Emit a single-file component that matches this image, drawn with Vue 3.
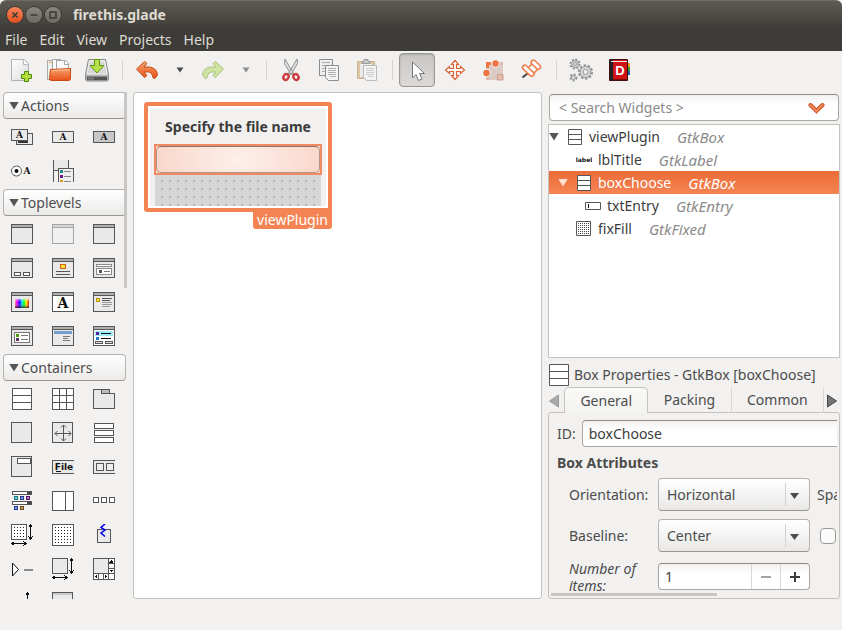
<script setup>
import { ref } from 'vue'

const D = '#565656'
const L = '#e9e9e9'
const box = (x, y, w, h, fill = L, stroke = D) => ({
  d: `M${x + 0.5} ${y + 0.5}h${w - 1}v${h - 1}h${1 - w}z`, fill, stroke
})
const solid = (x, y, w, h, fill) => ({ d: `M${x} ${y}h${w}v${h}h${-w}z`, fill, stroke: 'none' })
const line = (d, stroke = D) => ({ d, fill: 'none', stroke })
const glyph = (text, x, y, size) => ({ text, x, y, size })
const win = (fill = L, stroke = D, bar = '#b0b0b0') => [
  box(0, 1, 22, 20, fill, stroke), solid(1, 2, 20, 2, bar), line('M1 4.5h20', stroke)
]
const hArrow = line('M1 19.5h14M3.500 17.5l-2.500 2 2.500 2M12.500 17.5l2.500 2-2.500 2', '#111')
const vArrow = line('M19.5 1v14M17.500 3.5l2-2.500 2 2.500M17.500 12.5l2 2.500 2-2.500', '#111')
const dots = (x0, y0, nx, ny, step) => {
  const out = []
  for (let i = 0; i < nx; i++) for (let j = 0; j < ny; j++) out.push(solid(x0 + i * step, y0 + j * step, 1, 1, '#222'))
  return out
}

const groups = [
  {
    name: 'Actions',
    icons: [
      { id: 'Action Group', shapes: [box(5, 7, 17, 12), solid(7, 15, 10, 2, '#333'), box(0, 3, 17, 12), glyph('A', 8.5, 12, 9)] },
      { id: 'Action', shapes: [box(0, 5, 22, 12), glyph('A', 11, 14, 9)] },
      { id: 'Toggle Action', shapes: [box(0, 5, 22, 12, '#c8c8c8'), glyph('A', 11, 14, 9)] },
      { id: 'Radio Action', shapes: [{ d: 'M5.500 6a5 5 0 1 0 .01 0z', fill: '#fff', stroke: D, smooth: true }, { d: 'M5.500 9a2 2 0 1 0 .01 0z', fill: '#111', stroke: 'none', smooth: true }, glyph('A', 16, 14, 9)] },
      { id: 'Recent Action', shapes: [solid(2, 0, 15, 10, '#e9e9e9'), line('M1.500 0v22M16.500 0v8M2 10.500h4'), { d: 'M6.500 22v-13.500h15v13.500', fill: '#eee', stroke: D }, solid(8, 10, 3, 3, '#1f8a8a'), solid(8, 15, 3, 3, '#6a1f8a'), solid(8, 20, 3, 2, '#d59a1a'), line('M12 11.500h7M12 16.500h7M12 21.500h7', '#888')] }
    ]
  },
  {
    name: 'Toplevels',
    icons: [
      { id: 'Window', shapes: win() },
      { id: 'Offscreen Window', shapes: win('#f0f0f0', '#a5a5a5', '#d5d5d5') },
      { id: 'Application Window', shapes: win() },
      { id: 'Dialog Box', shapes: [...win(), box(3, 15, 7, 4, '#fff'), box(12, 15, 7, 4, '#fff')] },
      { id: 'About Dialog', shapes: [...win(), box(8, 7, 6, 5, '#ffe13a', '#d5620a'), line('M4 14.500h14M4 17.500h14')] },
      { id: 'Assistant', shapes: [...win(), box(3, 7, 16, 3, '#fff', '#8a8a8a'), box(3, 11, 16, 7, '#fff', '#8a8a8a'), solid(6, 13, 3, 3, '#555'), line('M11 14.500h6', '#777')] },
      { id: 'Color Chooser Dialog', shapes: [...win(), solid(4, 8, 14, 9, 'url(#hues)'), solid(4, 8, 14, 9, 'url(#shade)')] },
      { id: 'Font Chooser Dialog', shapes: [...win('#fff'), glyph('A', 11, 17, 14)] },
      { id: 'Message Dialog', shapes: [...win(), box(3, 7, 4, 4, '#ffe13a', '#b8920a'), line('M9 7.500h10M9 9.500h8'), line('M9 11.500h10M9 13.500h10M9 15.500h8', '#9a9a9a')] },
      { id: 'Recent Chooser Dialog', shapes: [...win(), box(3, 7, 16, 11, '#fff', '#777'), solid(5, 9, 3, 3, '#4a9a08'), solid(5, 13, 3, 3, '#5c3566'), line('M10 10.500h7M10 14.500h7', '#777')] },
      { id: 'App Chooser Dialog', shapes: [...win(), solid(2, 6, 18, 3, '#729fcf'), line('M11 11.500h7M11 13.500h5M11 15.500h7', '#777')] },
      { id: 'File Chooser Dialog', shapes: [...win('#fff'), solid(2, 6, 18, 5, '#9eecf5'), solid(3, 7, 3, 3, '#5b1fa0'), solid(3, 12, 3, 3, '#1f7ad5'), line('M8 8.500h10M8 13.500h10', '#111'), box(2, 16, 8, 3, '#ddd'), box(12, 16, 8, 3, '#ddd')] }
    ]
  },
  {
    name: 'Containers',
    icons: [
      { id: 'Box', shapes: [box(1, 0, 20, 22, '#fff'), line('M1 7.500h20M1 14.500h20')] },
      { id: 'Grid', shapes: [box(0, 0, 22, 22, '#fff'), line('M0 7.500h22M0 14.500h22M7.500 0v22M14.500 0v22')] },
      { id: 'Notebook', shapes: [{ d: 'M.5 20.500v-19h8v4h13v15z', fill: L, stroke: D }, box(8, 1, 9, 5, '#bbb')] },
      { id: 'Frame', shapes: [box(0, 0, 21, 21)] },
      { id: 'Aspect Frame', shapes: [box(0, 0, 21, 21), { ...line('M3 11.500h16M11.500 3v16M9 5.500l2.500-2.500 2.500 2.500M9 16.500l2.500 2.500 2.500-2.500M5.500 9l-2.500 2.500 2.500 2.500M16.500 9l2.500 2.500-2.500 2.500'), smooth: true }] },
      { id: 'List Box', shapes: [box(1, 1, 20, 6, '#fff'), box(1, 8, 20, 6, '#fff'), box(1, 15, 20, 6, '#fff')] },
      { id: 'Overlay', shapes: [box(0, 0, 21, 21), box(6, 2, 14, 6, '#fff')] },
      { id: 'Menu Bar', shapes: [{ d: 'M22 4.500h-21.500v13h21.500', fill: L, stroke: D }, { ...glyph('File', 12, 14, 9), mono: true }, line('M4 15.500h5', '#111')] },
      { id: 'Toolbar', shapes: [{ d: 'M22 4.500h-21.500v13h21.500', fill: L, stroke: D }, box(3, 7, 8, 8, '#eee'), box(13, 7, 8, 8, '#eee')] },
      { id: 'Tool Palette', shapes: [box(1, 1, 20, 4, '#fff'), solid(16, 2, 4, 2, '#444'), box(3, 6, 4, 4, '#7acccc', '#178080'), box(9, 6, 4, 4, '#8a9ae0', '#223a90'), box(15, 6, 4, 4, '#c07ac8', '#5a1a70'), box(1, 11, 20, 4, '#fff'), solid(16, 12, 4, 2, '#444'), box(3, 16, 4, 4, '#8a9ae0', '#223a90'), box(9, 16, 4, 4, '#c8a070', '#6a4a1a')] },
      { id: 'Paned', shapes: [box(0, 1, 22, 20, '#fff'), line('M13.500 1v20')] },
      { id: 'Button Box', shapes: [box(0, 7, 6, 6, '#fff'), box(8, 7, 6, 6, '#fff'), box(16, 7, 6, 6, '#fff')] },
      { id: 'Layout', shapes: [box(0, 0, 16, 16, '#fff'), ...dots(3, 3, 4, 4, 3), hArrow, vArrow] },
      { id: 'Fixed', shapes: [box(0, 0, 22, 22, '#fff'), ...dots(3, 3, 6, 6, 3)] },
      { id: 'Event Box', shapes: [box(4, 5, 14, 14), { ...line('M12 0l-4 3.500 4 2.500-4 3 4 3.500', '#0000f0'), width: 1.5, smooth: true }] },
      { id: 'Expander', shapes: [{ d: 'M1.500 5v13l6-6.500z', fill: '#fff', stroke: '#111', smooth: true }, solid(13, 11, 9, 2, '#8a8a8a')] },
      { id: 'Viewport', shapes: [box(0, 0, 16, 16), hArrow, vArrow] },
      { id: 'Scrolled Window', shapes: [box(0, 0, 22, 22, '#fff'), solid(1, 1, 14, 14, L), line('M15.500 0v22M0 15.500h22M5.500 15v7M10.500 15v7M15 5.500h7M15 10.500h7'), { d: 'M18.500 2l2 2.500h-4zM18.500 14l2-2.500h-4zM2 18.500l2-2v4zM14 18.500l-2-2v4z', fill: '#111', stroke: 'none' }] },
      { id: 'Size Group', shapes: [line('M16.500 1v14M14.500 3.500l2-2.500 2 2.500', '#111')] },
      { id: 'Revealer', shapes: [box(0, 0, 21, 21), solid(1, 1, 19, 2, '#ccc')] }
    ]
  }
]

const menus = ['File', 'Edit', 'View', 'Projects', 'Help']
const tree = [
  { name: 'viewPlugin', type: 'GtkBox', depth: 0, icon: 'box', open: true },
  { name: 'lblTitle', type: 'GtkLabel', depth: 1, icon: 'label' },
  { name: 'boxChoose', type: 'GtkBox', depth: 1, icon: 'box', open: true },
  { name: 'txtEntry', type: 'GtkEntry', depth: 2, icon: 'entry' },
  { name: 'fixFill', type: 'GtkFixed', depth: 1, icon: 'fixed' }
]
const selected = ref('boxChoose')
const tabs = ['General', 'Packing', 'Common']
const activeTab = ref('General')
const search = ref('')
const entryText = ref('')
const widgetId = ref('boxChoose')
const orientation = ref('Horizontal')
const baseline = ref('Center')
const items = ref(1)
</script>

<template>
  <div class="app">
    <svg class="defs" aria-hidden="true">
      <defs>
        <linearGradient id="hues"><stop offset="0" stop-color="#ff8080" /><stop offset=".12" stop-color="#f0f" /><stop offset=".35" stop-color="#00f" /><stop offset=".5" stop-color="#0ff" /><stop offset=".65" stop-color="#0f0" /><stop offset=".8" stop-color="#ff0" /><stop offset="1" stop-color="#f00" /></linearGradient>
        <linearGradient id="shade" x2="0" y2="1"><stop offset="0" stop-color="#fff" stop-opacity=".5" /><stop offset=".4" stop-color="#fff" stop-opacity="0" /><stop offset="1" stop-color="#000" stop-opacity=".7" /></linearGradient>
        <linearGradient id="orange" x2="0" y2="1"><stop offset="0" stop-color="#f9a06b" /><stop offset="1" stop-color="#e8501a" /></linearGradient>
        <linearGradient id="metal" x2="0" y2="1"><stop offset="0" stop-color="#e6e6e6" /><stop offset="1" stop-color="#a8a8a8" /></linearGradient>
        <linearGradient id="paper" x2="1" y2="1"><stop offset="0" stop-color="#fff" /><stop offset="1" stop-color="#dcdcdc" /></linearGradient>
      </defs>
    </svg>

    <header class="titlebar">
      <button class="wm close" aria-label="Close"><svg viewBox="0 0 16 16"><path d="M5.500 5.500l5 5M10.500 5.500l-5 5" /></svg></button>
      <button class="wm" aria-label="Minimize"><svg viewBox="0 0 16 16"><path d="M4.500 8h7" /></svg></button>
      <button class="wm" aria-label="Maximize"><svg viewBox="0 0 16 16"><path d="M5 5h6v6h-6z" /></svg></button>
      <h1>firethis.glade</h1>
    </header>

    <nav class="menubar">
      <button v-for="m in menus" :key="m">{{ m }}</button>
    </nav>

    <div class="toolbar">
      <button aria-label="New">
        <svg viewBox="0 0 24 24"><path d="M2.500 1.500h13l4 4v17h-17z" fill="url(#paper)" stroke="#b0b0b0" /><path d="M14 1.500l.5 5 5 .5" fill="#fff" stroke="#b0b0b0" /><path d="M15.500 13.500h4v3h3v4h-3v3h-4v-3h-3v-4h3z" fill="#b4dc3c" stroke="#4e8a06" /></svg>
      </button>
      <button aria-label="Open">
        <svg viewBox="0 0 24 24"><path d="M.5 2.500h7v19h-7z" fill="#eee" stroke="#aaa" /><path d="M2 4.500h4" stroke="#f0a040" /><path d="M5.500 1.500h8l3 3v8h-11z" fill="#fff" stroke="#a5a5a5" /><path d="M9.500 2.500h9l3 3v6h-12z" fill="#fafafa" stroke="#a5a5a5" /><path d="M17.500 2.500v4h4" fill="none" stroke="#a5a5a5" /><path d="M3.500 11.500l20-1v10q0 2-2 2h-17q-2 0-2-2z" fill="url(#orange)" stroke="#c74a12" /><path d="M4.500 12.500l18-.8" stroke="#ffc49c" /></svg>
      </button>
      <button aria-label="Save">
        <svg viewBox="0 0 24 24"><path d="M3.500 1.500h17l3 15v4.500q0 2-2 2h-19q-2 0-2-2v-4.500z" fill="url(#metal)" stroke="#888" /><path d="M4.500 3h15l2.500 13h-20z" fill="#d6d6d6" stroke="#f2f2f2" /><path d="M2 18.500h20v3.500h-20z" fill="#555" /><path d="M4 21.500v-2M6 21.500v-2M8 21.500v-2" stroke="#aaa" /><path d="M9.500 1.500h5v6h4.500l-7 7.500-7-7.500h4.500z" fill="#b9e04a" stroke="#5a9a06" /></svg>
      </button>
      <span class="sep"></span>
      <button aria-label="Undo">
        <svg viewBox="0 0 24 24"><path d="M1.500 11l8-7.500 2.500 2-3 3.500h5.500q7.500 1 8 8l-2.500 3.500q-2.500 0-2.500-2.500-.5-4-4-4h-4.500l3 3.500-2.500 2z" fill="url(#orange)" stroke="#c2511b" /></svg>
      </button>
      <button class="arrow" aria-label="Undo history"><svg viewBox="0 0 8 6"><path d="M.5.500h7l-3.500 5z" fill="#4c4c4c" /></svg></button>
      <button aria-label="Redo" class="faded">
        <svg viewBox="0 0 24 24"><path d="M22.500 11l-8-7.500-2.500 2 3 3.500h-5.500q-7.500 1-8 8l2.500 3.500q2.500 0 2.500-2.500.5-4 4-4h4.500l-3 3.500 2.500 2z" fill="#b9dc6c" stroke="#7aa83a" /></svg>
      </button>
      <button class="arrow faded" aria-label="Redo history"><svg viewBox="0 0 8 6"><path d="M.5.500h7l-3.500 5z" fill="#4c4c4c" /></svg></button>
      <span class="sep"></span>
      <button aria-label="Cut">
        <svg viewBox="0 0 24 24"><path d="M6 1l8.500 14.500-2.500 1-6.500-11zM18 1l-8.500 14.500 2.500 1 6.500-11z" fill="#e2e2e2" stroke="#8e8e8e" /><ellipse cx="7" cy="19" rx="2.500" ry="3" fill="none" stroke="#cc3c40" stroke-width="2.400" transform="rotate(30 7 19)" /><ellipse cx="17" cy="19" rx="2.500" ry="3" fill="none" stroke="#cc3c40" stroke-width="2.400" transform="rotate(-30 17 19)" /></svg>
      </button>
      <button aria-label="Copy">
        <svg viewBox="0 0 24 24"><path d="M2.500 1.500h13v16h-13z" fill="#eee" stroke="#8c8c8c" /><path d="M5 4.500h8M5 7.500h8M5 10.500h3M5 13.500h3" stroke="#aaa" /><path d="M8.500 7.500h13v15h-10l-3-3z" fill="#f4f4f4" stroke="#8c8c8c" /><path d="M11 10.500h8M11 12.500h8M11 14.500h8M11 16.500h8M13 18.500h6" stroke="#b0b0b0" /></svg>
      </button>
      <button aria-label="Paste">
        <svg viewBox="0 0 24 24"><path d="M2.500 3.500h17v17h-17z" fill="#dcc7a6" stroke="#cbb48f" /><path d="M5 6h12v13h-12z" fill="#ececec" /><path d="M7 5.500v-2h2v-2h4v2h2v2z" fill="#ccc" stroke="#999" /><path d="M8.500 7.500h13v15h-10l-3-3z" fill="#f4f4f4" stroke="#bbb" /><path d="M11 10.500h8M11 12.500h8M11 14.500h8M11 16.500h8M13 18.500h6" stroke="#ccc" /></svg>
      </button>
      <span class="sep"></span>
      <button class="pressed" aria-label="Select widgets">
        <svg viewBox="0 0 24 24"><path d="M7.500 4v16l3.500-3.500 2.500 6 3.500-1.500-2.500-5.500h5z" fill="#fff" stroke="#777" /></svg>
      </button>
      <button aria-label="Drag and resize">
        <svg viewBox="0 0 24 24"><path d="M12 2.500l3.500 4h-2v4h4v-2l4 3.500-4 3.500v-2h-4v4h2l-3.500 4-3.500-4h2v-4h-4v2l-4-3.500 4-3.500v2h4v-4h-2z" fill="#fff" stroke="#dd6236" stroke-width="1.200" /></svg>
      </button>
      <button aria-label="Edit margins">
        <svg viewBox="0 0 24 24"><path d="M5 5h17v17h-17z" fill="#dccac5" /><path d="M5 10v-6h5v3h-2v3z" fill="#ee7744" /><path d="M16.500 22v-5.500h5.500v5.500z" fill="#e2bfb3" stroke="#cf9a88" /><path d="M17 4h5v3h-5zM5 17h3v5h-3z" fill="#dfb9ac" /><circle cx="14.500" cy="5.500" r="4.200" fill="#f2f1f0" /><circle cx="5.500" cy="15" r="4.200" fill="#f2f1f0" /><circle cx="14.500" cy="5.500" r="3.200" fill="#ee7340" /><circle cx="5.500" cy="15" r="3.200" fill="#ee7340" /></svg>
      </button>
      <button aria-label="Edit alignment">
        <svg viewBox="0 0 24 24"><path d="M3.500 19.500l5-4" stroke="#444" stroke-width="2" /><g fill="#fff" stroke="#f07f4e" stroke-width="1.600"><path d="M8.500 10.500l5.500-5.500 5.500 5.500-5.500 5.500z" /><rect x="2.500" y="10.500" width="14" height="4.500" rx="2.200" transform="rotate(43 9.500 12.500)" /><rect x="11.500" y="4.500" width="11" height="4.500" rx="2.200" transform="rotate(43 17 6.500)" /></g></svg>
      </button>
      <span class="sep"></span>
      <button aria-label="Preferences">
        <svg viewBox="0 0 24 24" fill="none" stroke="#959595"><circle cx="6" cy="6" r="4.500" stroke-width="2" stroke-dasharray="2 1.500" /><circle cx="6" cy="6" r="3.500" fill="#ddd" /><circle cx="6" cy="6" r="1.500" fill="#f2f1f0" /><circle cx="16.500" cy="14" r="6.700" stroke-width="2" stroke-dasharray="2.500 1.700" /><circle cx="16.500" cy="14" r="5.500" fill="#d8d8d8" /><circle cx="16.500" cy="14" r="2.500" fill="#f2f1f0" /><circle cx="4.500" cy="19.500" r="3" stroke-width="2" stroke-dasharray="2 1.500" /><circle cx="4.500" cy="19.500" r="2" fill="#ddd" /></svg>
      </button>
      <button aria-label="Documentation">
        <svg viewBox="0 0 24 24"><path d="M20 5h3v4h-3z" fill="#e8a020" /><path d="M20 9h3v4h-3z" fill="#3a9a30" /><path d="M20 13h3v4h-3z" fill="#2a60c0" /><path d="M2.500 1.500h18v21h-18z" fill="#d01216" stroke="#3a1010" /><path d="M3 2h3v20h-3z" fill="#222" /><path d="M4 3.500h16" stroke="#eee" /><path d="M6 21.500h14" stroke="#7a0a0a" /><text class="dmark" x="13" y="17">D</text></svg>
      </button>
    </div>

    <main class="work">
      <aside class="palette">
        <section v-for="g in groups" :key="g.name">
          <button class="group"><i class="tri"></i>{{ g.name }}</button>
          <div class="icons">
            <button v-for="ic in g.icons" :key="ic.id" :aria-label="ic.id">
              <svg viewBox="0 0 22 22">
                <template v-for="(s, i) in ic.shapes" :key="i">
                  <text v-if="s.text" :x="s.x" :y="s.y" :font-size="s.size" :class="{ sans: s.mono }">{{ s.text }}</text>
                  <path v-else :d="s.d" :fill="s.fill" :stroke="s.stroke" :stroke-width="s.width || 1" :class="{ smooth: s.smooth }" />
                </template>
              </svg>
            </button>
          </div>
        </section>
        <div class="vscroll"></div>
      </aside>

      <section class="canvas">
        <div class="widget">
          <div class="form">
            <label class="formtitle" for="txtEntry">Specify the file name</label>
            <div class="picked"><input id="txtEntry" v-model="entryText" type="text" /></div>
            <div class="fixed"></div>
          </div>
          <span class="tag">viewPlugin</span>
        </div>
      </section>

      <aside class="inspector">
        <div class="search">
          <input v-model="search" type="text" placeholder="&lt; Search Widgets &gt;" aria-label="Search Widgets" />
          <svg viewBox="0 0 16 12"><path d="M2 3l6 6 6-6" fill="none" stroke="#c8501f" stroke-width="4" stroke-linecap="round" /><path d="M2 3l6 6 6-6" fill="none" stroke="#f58a5c" stroke-width="2" stroke-linecap="round" /></svg>
        </div>

        <ul class="tree">
          <li v-for="n in tree" :key="n.name" :class="[{ sel: n.name === selected }, 'depth' + n.depth]" @click="selected = n.name">
            <span class="exp"><i v-if="n.open" class="tri"></i></span>
            <svg v-if="n.icon === 'box'" class="nodeicon" viewBox="0 0 16 16"><path d="M1.500.500h13v15h-13zM1 5.500h14M1 10.500h14" fill="#fff" stroke="#565656" /></svg>
            <svg v-else-if="n.icon === 'label'" class="nodeicon" viewBox="0 0 16 16"><text x="8" y="10" class="lbl">label</text></svg>
            <svg v-else-if="n.icon === 'entry'" class="nodeicon" viewBox="0 0 16 16"><path d="M.5 4.500h15v7h-15z" fill="#fff" stroke="#565656" /><path d="M3.500 6v4" stroke="#111" /></svg>
            <svg v-else class="nodeicon" viewBox="0 0 16 16"><path d="M.5.500h14v14h-14z" fill="#fff" stroke="#565656" /><path v-for="r in 6" :key="r" :d="`M2 ${r * 2 + 0.5}h11`" stroke="#444" stroke-dasharray="1 1" /></svg>
            <span class="name">{{ n.name }}</span><em>{{ n.type }}</em>
          </li>
        </ul>

        <h2 class="proptitle">
          <svg viewBox="0 0 20 22"><path d="M.5.500h19v21h-19zM0 7.500h20M0 14.500h20" fill="#fff" stroke="#565656" /></svg>
          Box Properties - GtkBox [boxChoose]
        </h2>

        <div class="tabs" role="tablist">
          <button class="nav" aria-label="Previous tab"><svg viewBox="0 0 10 12"><path d="M9.500.500v12l-9-6z" fill="#aaa" stroke="#999" /></svg></button>
          <button v-for="t in tabs" :key="t" role="tab" class="tab" :class="{ on: t === activeTab }" @click="activeTab = t">{{ t }}</button>
          <button class="nav" aria-label="Next tab"><svg viewBox="0 0 10 12"><path d="M.5.500v12l9-6z" fill="#777" stroke="#444" /></svg></button>
        </div>

        <div class="props">
          <div class="view">
            <div class="idrow"><label for="wid">ID:</label><input id="wid" v-model="widgetId" type="text" /></div>
            <h3>Box Attributes</h3>
            <div class="grid">
              <label for="ori">Orientation:</label>
              <span class="combo"><select id="ori" v-model="orientation"><option>Horizontal</option><option>Vertical</option></select></span>
              <span class="extra">Spa</span>

              <label for="base">Baseline:</label>
              <span class="combo"><select id="base" v-model="baseline"><option>Top</option><option>Center</option><option>Bottom</option></select></span>
              <span class="extra"><input type="checkbox" class="check" aria-label="Homogeneous" /></span>

              <label for="num" class="ital">Number of items:</label>
              <span class="spin">
                <input id="num" v-model="items" type="text" />
                <button class="minus" aria-label="Decrease" @click="items--"><svg viewBox="0 0 12 12"><path d="M1 6h10" /></svg></button>
                <button aria-label="Increase" @click="items++"><svg viewBox="0 0 12 12"><path d="M1 6h10M6 1v10" /></svg></button>
              </span>
            </div>
          </div>
          <div class="hscroll"></div>
        </div>
      </aside>
    </main>
  </div>
</template>

<style>
body { background: #f2f1f0; }
</style>

<style scoped>
.app {
  display: flex; flex-direction: column; height: 100vh; overflow: hidden;
  font: 14px/20px "Noto Sans", "Open Sans", sans-serif; color: #4c4c4c; background: #f2f1f0;
}
.app *, .app *::before { box-sizing: border-box; }
button, input, select { font: inherit; color: inherit; margin: 0; padding: 0; border: 0; background: none; outline: 0; }
svg { display: block; flex: none; }
h1, h2, h3, ul { margin: 0; padding: 0; font-size: inherit; font-weight: normal; list-style: none; }
.defs { position: absolute; width: 0; height: 0; }

.titlebar {
  display: flex; align-items: center; gap: 3px; height: 28px; flex: none; padding: 1px 7px 0;
  background: linear-gradient(#5c5a52, #46443f 80%, #3e3d39); border-top: 1px solid #6d6b62;
  border-radius: 6px 6px 0 0; color: #dfdbd2;
}
.titlebar h1 { font-weight: bold; margin-left: 9px; }
.wm { width: 16px; height: 16px; border-radius: 50%; background: linear-gradient(#8a877e, #6b6961); box-shadow: 0 0 0 1px #3a3935; }
.wm svg { width: 16px; height: 16px; fill: none; stroke: #3a3935; stroke-width: 1.500; }
.wm.close { background: linear-gradient(#f7845a, #e4501f); }
.menubar { display: flex; height: 23px; flex: none; padding-left: 5px; gap: 12px; background: #3d3c38; color: #dfdbd2; }

.toolbar { display: flex; align-items: center; height: 41px; flex: none; padding: 0 3px 3px 2px; }
.toolbar button { display: flex; align-items: center; justify-content: center; width: 38px; height: 34px; flex: none; }
.toolbar svg { width: 24px; height: 24px; }
.toolbar .arrow { width: 28px; }
.toolbar .arrow svg { width: 8px; height: 6px; }
.toolbar .faded { opacity: .6; }
.toolbar .sep { width: 12px; height: 20px; flex: none; background: linear-gradient(#d6d4d2, #d6d4d2) 6px 0 / 1px 100% no-repeat; }
.toolbar .pressed { width: 36px; margin: 0 1px; border: 1px solid #9b9996; border-radius: 4px; background: linear-gradient(#c9c7c5, #dcdad8); box-shadow: inset 0 1px 2px #aaa; }
.dmark { font: bold 13px "Liberation Sans", sans-serif; fill: #fff; text-anchor: middle; }

.work { display: flex; flex: 1; min-height: 0; padding: 0 2px 31px 1px; }
.palette { position: relative; width: 126px; flex: none; overflow: hidden; }
.group {
  display: flex; align-items: center; gap: 2px; width: 123px; height: 27px; margin-left: 2px; padding-left: 5px;
  border: 1px solid #b5b2af; border-bottom-color: #989592; border-radius: 4px; background: linear-gradient(#fff, #ebeae9);
}
.tri { width: 10px; height: 8px; background: #555; clip-path: polygon(0 0, 100% 0, 50% 100%); flex: none; }
.icons { display: grid; grid-template-columns: repeat(3, 41px); grid-auto-rows: 34px; align-items: center; padding: 1px 0 1px 10px; }
.icons svg { width: 22px; height: 22px; shape-rendering: crispEdges; }
.icons .smooth { shape-rendering: auto; }
.icons text { font-family: "DejaVu Serif", serif; font-weight: bold; fill: #111; text-anchor: middle; }
.icons text.sans { font-family: "DejaVu Sans", sans-serif; }
.icons button { width: 22px; height: 22px; }
.vscroll { position: absolute; top: 0; right: 0; width: 3px; height: 196px; background: #c9c7c5; }

.canvas { flex: 1; min-width: 0; margin: 0 6px; background: #fff; border: 1px solid #c5c3c0; border-radius: 3px; padding: 9px 10px; }
.widget { position: relative; width: 188px; border: 4px solid #f58454; border-radius: 3px; padding: 2px; }
.form { background: #f2f1f0; padding: 7px 4px 0; }
.formtitle { display: block; height: 29px; line-height: 24px; text-align: center; font-weight: bold; color: #3c3c3c; white-space: nowrap; }
.picked { border: 2px solid #f08a63; height: 31px; background: #fbd5c6; }
.picked input {
  width: 100%; height: 27px; border: 1px solid #b39487; border-top-color: #8d7269; border-radius: 5px; padding: 0 6px; display: block;
  background: radial-gradient(ellipse 90px 60px, #fdf0ea, #f9d5c8);
}
.fixed { height: 31px; margin: 0 1px; background: conic-gradient(at 2px 2px, #d6d6d6 75%, #b4b4b4 0) 6px 5px / 8px 8px; }
.tag { position: absolute; right: -4px; top: 100%; height: 21px; padding: 3px 4px 0; line-height: 18px; background: #f58454; color: #fff; border-radius: 0 0 3px 3px; }

.inspector { width: 292px; flex: none; display: flex; flex-direction: column; min-height: 0; }
.search {
  display: flex; align-items: center; flex: none; height: 27px; margin: 2px 1px 3px; padding: 0 13px 0 9px;
  border: 1px solid #aaa7a3; border-top-color: #8e8b87; border-radius: 4px; background: linear-gradient(#f3f2f1, #fff 40%);
}
.search input { flex: 1; min-width: 0; }
.search input::placeholder { color: #8a8a8a; opacity: 1; }
.search svg { width: 17px; height: 12px; }
.tree { flex: 1; min-height: 0; overflow: hidden; background: #fff; border: 1px solid #c5c3c0; color: #3c3c3c; }
.tree li { display: flex; align-items: center; height: 23px; white-space: nowrap; }
.depth1 { padding-left: 9px; }
.depth2 { padding-left: 18px; }
.tree .exp { width: 18px; flex: none; display: flex; }
.nodeicon { width: 16px; height: 16px; margin-right: 6px; }
.tree em { margin-left: 17px; font-size: 15px; color: #8a8a8a; }
.tree .sel, .tree .sel em { color: #fff; }
.tree .sel { background: linear-gradient(#ea6b36, #f58555); }
.sel .tri { background: #ffe0d0; }
.lbl { font: bold 6px "DejaVu Sans", sans-serif; fill: #111; text-anchor: middle; }

.proptitle { display: flex; align-items: center; gap: 5px; height: 29px; flex: none; padding: 5px 1px 0; white-space: nowrap; }
.proptitle svg { width: 20px; height: 22px; }
.tabs { display: flex; height: 26px; flex: none; margin-bottom: -1px; position: relative; }
.nav { width: 16px; flex: none; display: flex; align-items: center; justify-content: center; padding-right: 4px; }
.nav:last-child { padding: 0; }
.nav svg { width: 10px; height: 13px; overflow: visible; }
.tab { flex: 1 1 auto; border-right: 1px solid #d9d7d5; }
.tab.on { border: 1px solid #c5c3c0; border-bottom: 0; border-radius: 5px 5px 0 0; background: linear-gradient(#f9f9f8, #f4f3f2); }
.props { height: 187px; flex: none; border: 1px solid #c5c3c0; border-radius: 3px; background: #f2f1f0; padding: 7px 2px 2px; display: flex; flex-direction: column; }
.view { overflow: hidden; flex: 1; min-height: 0; }
.idrow { display: flex; align-items: center; padding-left: 6px; gap: 6px; }
.idrow input { flex: 1; min-width: 0; height: 27px; margin-right: -6px; }
.idrow input, .spin { border: 1px solid #aaa7a3; border-top-color: #8e8b87; border-radius: 4px; background: linear-gradient(#f3f2f1, #fff 40%); padding-left: 6px; color: #3c3c3c; }
h3 { font-weight: bold; padding-left: 6px; height: 31px; line-height: 31px; }
.grid { display: grid; grid-template-columns: 81px 152px 40px; grid-auto-rows: 33px; align-items: center; gap: 8px; padding-left: 18px; white-space: nowrap; line-height: 17px; }
.ital { font-style: italic; white-space: normal; }
.combo { position: relative; height: 33px; border: 1px solid #b5b2af; border-bottom-color: #989592; border-radius: 4px; background: linear-gradient(#fff, #e9e8e7); }
.combo select { appearance: none; width: 100%; height: 100%; padding: 0 30px 0 8px; }
.combo::before { content: ""; position: absolute; right: 23px; top: 4px; bottom: 4px; border-left: 1px solid #d3d1cf; }
.combo::after { content: ""; position: absolute; right: 10px; top: 14px; width: 9px; height: 6px; background: #4c4c4c; clip-path: polygon(0 0, 100% 0, 50% 100%); pointer-events: none; }
.extra { margin-left: -1px; }
.check { appearance: none; display: block; width: 16px; height: 16px; margin-left: 3px; border: 1px solid #9c9996; border-radius: 4px; background: #fafafa; }
.spin { display: flex; height: 27px; }
.spin input { flex: 1; min-width: 0; }
.spin button { width: 29px; border-left: 1px solid #d9d7d5; display: flex; align-items: center; justify-content: center; }
.spin svg { width: 12px; height: 12px; stroke: #3c3c3c; stroke-width: 2; }
.spin .minus svg { stroke: #a5a39f; }
.hscroll { height: 3px; width: 166px; background: #c9c7c5; flex: none; }
</style>
